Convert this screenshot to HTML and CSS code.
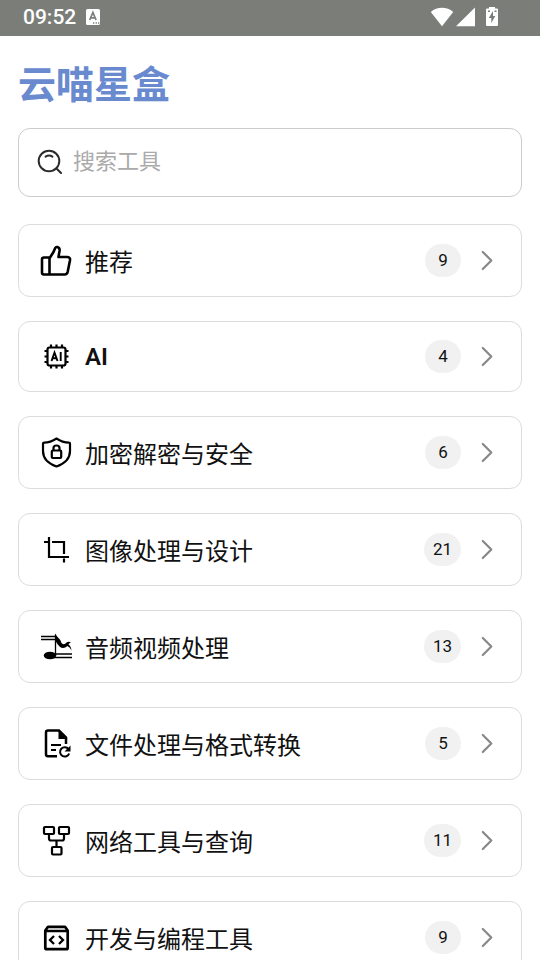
FILE: index.html
```html
<!DOCTYPE html>
<html lang="zh-CN">
<head>
<meta charset="utf-8">
<meta name="viewport" content="width=device-width, initial-scale=1">
<title>云喵星盒</title>
<link rel="stylesheet" href="styles.css">
</head>
<body>
<svg class="defs" aria-hidden="true">
  <symbol id="chevron" viewBox="0 0 24 24"><path d="M7.800 3l8.500 8.500-8.500 8.500" fill="none" stroke="#888" stroke-width="2.200" stroke-linecap="round" stroke-linejoin="round"/></symbol>
</svg>
<div class="status">
  <div class="status-group">
    <time>09:52</time>
    <svg width="16" height="16" viewBox="0 0 16 16" aria-hidden="true"><rect x="1" y="0" width="14" height="16" rx="1.500" fill="#fff"/><path d="M4.700 11L7.900 3.500 11.100 11M5.800 8.800h4.200" fill="none" stroke="#7b7d79" stroke-width="1.700"/><path d="M8 14h1.300M10.600 14h1.300M13 14h1.300" stroke="#7b7d79" stroke-width="1.300"/></svg>
  </div>
  <div class="status-icons">
    <svg width="24" height="20" viewBox="0 0 24 20" aria-hidden="true"><path d="M.8 5C7-.6 17-.6 23.200 5L12 19.300z" fill="#fff"/></svg>
    <svg width="20" height="20" viewBox="0 0 20 20" aria-hidden="true"><path d="M19 .5v18.800H0z" fill="#fff"/></svg>
    <svg class="battery" width="12" height="20" viewBox="0 0 12 20" aria-hidden="true"><path d="M3 0h6v1.500h2q1 0 1 1V18q0 1-1 1H1q-1 0-1-1V2.500q0-1 1-1h2z" fill="#fff"/><path d="M7 4L2.800 11h2.500v5l4-7H7zM2 3.500h2v1.500H2zM8.500 3.500h2v1.500h-2z" fill="#7b7d79"/></svg>
  </div>
</div>
<main>
  <h1>云喵星盒</h1>
  <label class="search">
    <svg width="26" height="26" viewBox="0 0 26 26" fill="none" stroke="#2c2c2c" stroke-width="2" stroke-linecap="round" aria-hidden="true"><circle cx="12" cy="12" r="10.300"/><path d="M19.500 19.500l4.500 4.500M8.600 7.700q3.400-2.300 6.800 0"/></svg>
    <input type="search" placeholder="搜索工具" aria-label="搜索工具">
  </label>
  <nav class="list">
    <a class="card" href="#recommend">
      <svg class="icon" viewBox="0 0 32 32" fill="none" stroke="#000" stroke-width="2.600" stroke-linejoin="round" aria-hidden="true"><path d="M10 12.500l3.500-5.500 1.700-4q.7-1.300 2.200-.9 2.500.8 2.200 3.400L18.500 12h9q3 .3 2.500 3.200l-2.300 11.600q-.6 2.700-3 2.700H4q-2 0-2-2V14.500q0-2 2-2zM9.500 12.500v17"/></svg>
      <span class="name">推荐</span><span class="badge">9</span><svg class="arrow" aria-hidden="true"><use href="#chevron"/></svg>
    </a>
    <a class="card" href="#ai">
      <svg class="icon" viewBox="0 1 32 32" fill="none" stroke="#000" stroke-width="2.200" aria-hidden="true"><rect x="7.500" y="7.500" width="18" height="18" rx="2"/><path d="M11 7V4.500M16.500 7V4.500M22 7V4.500M11 28.500V26M16.500 28.500V26M22 28.500V26M7 11H4.500M7 16.500H4.500M7 22H4.500M28.500 11H26M28.500 16.500H26M28.500 22H26"/><path d="M11.500 21l3-8.500 3 8.500M12.700 18.300h3.600M20.700 12v9" stroke-width="1.900"/></svg>
      <span class="name latin">AI</span><span class="badge">4</span><svg class="arrow" aria-hidden="true"><use href="#chevron"/></svg>
    </a>
    <a class="card" href="#security">
      <svg class="icon" viewBox="0 1 32 32" fill="none" stroke="#000" stroke-width="2.200" stroke-linejoin="round" aria-hidden="true"><path d="M16.500 2.500q6 4 12.500 4.200 1 0 1 1V15c0 7-5 12.500-13.500 15.500C8 27.500 3 22 3 15V7.700q0-1 1-1Q10.500 6.500 16.500 2.500z"/><rect x="11.800" y="14.500" width="9.400" height="7.500" rx="1"/><path d="M13.500 14v-2q0-2.500 3-2.500t3 2.500v2"/></svg>
      <span class="name">加密解密与安全</span><span class="badge">6</span><svg class="arrow" aria-hidden="true"><use href="#chevron"/></svg>
    </a>
    <a class="card" href="#image">
      <svg class="icon" viewBox="0 .5 32 32" fill="none" stroke="#000" stroke-width="2.200" aria-hidden="true"><path d="M4 8.500h5M9 3.500V23.500h20M12 8.500h12V20.500M24 25v4"/></svg>
      <span class="name">图像处理与设计</span><span class="badge">21</span><svg class="arrow" aria-hidden="true"><use href="#chevron"/></svg>
    </a>
    <a class="card" href="#media">
      <svg class="icon" viewBox="0 .5 32 32" aria-hidden="true"><path d="M1 6h14M1 9h14M15 23.500h17M12 27h20" stroke="#000" stroke-width="1.300"/><path d="M15.500 4v21" stroke="#000" stroke-width="1.300"/><ellipse cx="10" cy="25" rx="6.200" ry="3.800"/><path d="M15 3q1.500 2.500 3.500 4.500 2.500 2 3 5 1.500 2 4 .5 2-3 5.500-1-2 .5-2.500 2 2.500 1.500 3 6-1.500-3.500-4-4.500-4 3.500-7.500 1-3-3-4.500-6z"/></svg>
      <span class="name">音频视频处理</span><span class="badge">13</span><svg class="arrow" aria-hidden="true"><use href="#chevron"/></svg>
    </a>
    <a class="card" href="#files">
      <svg class="icon" viewBox="0 .5 32 32" fill="none" stroke="#000" stroke-width="2.500" aria-hidden="true"><path d="M17 28.700H8q-2 0-2-2V5q0-2 2-2h11l7 7v6.500"/><path d="M18.500 2.500l9 9h-9z" fill="#000" stroke="none"/><path d="M11 17.500h10M11 22.500h5" stroke-width="2.200"/><path d="M28.500 21.500a4.700 4.700 0 1 0 .7 4.500" stroke-width="2"/><path d="M30.500 18v6h-6z" fill="#000" stroke="none"/></svg>
      <span class="name">文件处理与格式转换</span><span class="badge">5</span><svg class="arrow" aria-hidden="true"><use href="#chevron"/></svg>
    </a>
    <a class="card" href="#network">
      <svg class="icon" viewBox="0 .5 32 32" fill="none" stroke="#000" stroke-width="2.200" aria-hidden="true"><rect x="4" y="2.500" width="10" height="7" rx="1"/><rect x="19" y="2.500" width="10" height="7" rx="1"/><rect x="12" y="22.500" width="9.500" height="7.500" rx="1"/><path d="M9 9.500V14q0 2 2 2h11q2 0 2-2V9.500M16.500 16v6.500"/></svg>
      <span class="name">网络工具与查询</span><span class="badge">11</span><svg class="arrow" aria-hidden="true"><use href="#chevron"/></svg>
    </a>
    <a class="card" href="#dev">
      <svg class="icon" viewBox="0 .5 32 32" fill="none" stroke="#000" stroke-width="2.700" stroke-linejoin="round" aria-hidden="true"><path d="M5.300 9L8 5.300h17L27.700 9v17.200q0 1.500-1.500 1.500H6.800q-1.500 0-1.500-1.500zM5.500 9.500h22"/><path d="M14 14.500l-4 4 4 4M19 14.500l4 4-4 4" stroke-width="2.300" stroke-linejoin="miter"/></svg>
      <span class="name">开发与编程工具</span><span class="badge">9</span><svg class="arrow" aria-hidden="true"><use href="#chevron"/></svg>
    </a>
  </nav>
</main>
</body>
</html>
```
FILE: styles.css
```css
* { box-sizing: border-box; }
html { scrollbar-width: none; }
body {
  margin: 0;
  background: #fff;
  color: #111;
  font-family: Roboto, "Noto Sans CJK SC", sans-serif;
}
svg { display: block; flex: none; }
.defs { display: none; }
.status {
  display: flex;
  align-items: center;
  justify-content: space-between;
  height: 36px;
  padding: 0 42px 2px 23px;
  background: #7b7d79;
  color: #fff;
  font-size: 21px;
  font-weight: 500;
}
.status-group { display: flex; align-items: center; gap: 9px; }
.status-icons { display: flex; align-items: center; gap: 2px; }
.battery { margin-left: 8px; }
main { padding: 21px 18px 24px; }
h1 {
  margin: 0 0 15px;
  color: #6a8ad0;
  font-size: 38px;
  font-weight: 700;
  line-height: 56px;
}
.search {
  display: flex;
  align-items: center;
  gap: 10px;
  height: 69px;
  margin-bottom: 27px;
  padding: 0 18px 2px;
  border: 1px solid #ccc;
  border-radius: 12px;
}
.search input {
  flex: 1;
  min-width: 0;
  padding: 0;
  border: 0;
  outline: 0;
  background: none;
  color: inherit;
  font: inherit;
  font-size: 22px;
}
.search input::placeholder { color: #aaa; }
.list { display: grid; gap: 24px; }
.card {
  display: flex;
  align-items: center;
  padding: 18px 22px 18px 21px;
  border: 1px solid #dcdcdc;
  border-radius: 12px;
  color: inherit;
  text-decoration: none;
}
.icon { width: 32px; height: 32px; }
.name {
  flex: 1;
  margin-left: 13px;
  font-size: 24px;
}
.latin { font-weight: 600; }
.badge {
  min-width: 36px;
  padding: 0 9px;
  border-radius: 18px;
  background: #f1f1f1;
  font-size: 17px;
  font-weight: 400;
  line-height: 33px;
  text-align: center;
}
.arrow { width: 24px; height: 24px; margin-left: 14px; }
```
